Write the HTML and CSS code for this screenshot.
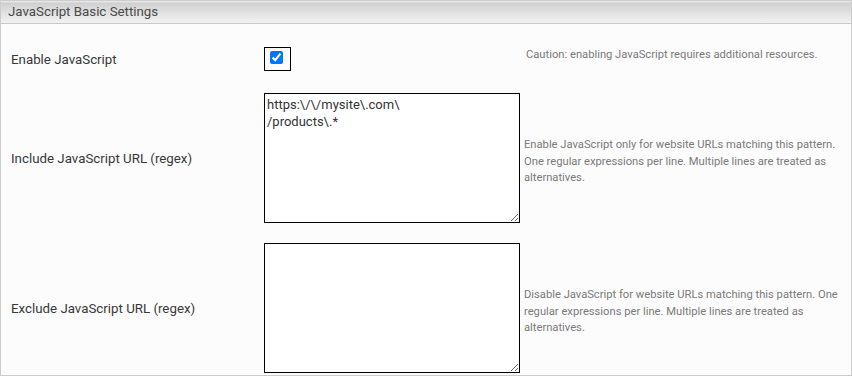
FILE: index.html
```html
<!DOCTYPE html>
<html>
<head>
<meta charset="utf-8">
<link rel="stylesheet" href="styles.css">
</head>
<body>
<div class="panel">
  <div class="panel-header">JavaScript Basic Settings</div>
  <div class="panel-body">
    <div class="row row-first">
      <div class="label">Enable JavaScript</div>
      <div class="control"><span class="check-box"><input type="checkbox" checked></span></div>
      <div class="help help-top">Caution: enabling JavaScript requires additional resources.</div>
    </div>
    <div class="row row-second">
      <div class="label">Include JavaScript URL (regex)</div>
      <div class="control"><textarea class="area">https:\/\/mysite\.com\
/products\.*</textarea></div>
      <div class="help">Enable JavaScript only for website URLs matching this pattern. One regular expressions per line. Multiple lines are treated as alternatives.</div>
    </div>
    <div class="row row-third">
      <div class="label">Exclude JavaScript URL (regex)</div>
      <div class="control"><textarea class="area"></textarea></div>
      <div class="help">Disable JavaScript for website URLs matching this pattern. One regular expressions per line. Multiple lines are treated as alternatives.</div>
    </div>
  </div>
</div>
</body>
</html>
```

FILE: styles.css
```css
html, body {
  margin: 0;
  padding: 0;
  background: #ffffff;
}

body {
  font-family: Roboto, "Liberation Sans", sans-serif;
}

.panel {
  width: 852px;
  height: 376px;
  box-sizing: border-box;
  border: 1px solid #cccccc;
  background: #fcfcfc;
  overflow: hidden;
}

.panel-header {
  height: 23px;
  box-sizing: border-box;
  border-bottom: 1px solid #c8c8c8;
  background: linear-gradient(to bottom, #f0f0f0 0px, #d0d0d0 2px, #f2f2f2 22px);
  color: #4a4a4a;
  font-size: 13.3px;
  line-height: 22px;
  padding-left: 7px;
}

.panel-body {
  display: flex;
  flex-direction: column;
}

.row {
  display: grid;
  grid-template-columns: 263px 259px 1fr;
  align-items: center;
}

.row-first {
  margin-top: 23px;
}

.row-second {
  margin-top: 22px;
}

.row-third {
  margin-top: 20px;
}

.label {
  padding-left: 10px;
  font-size: 13.3px;
  color: #383838;
}

.control {
  display: flex;
}

.check-box {
  display: flex;
  border: 1px solid #000000;
  padding: 3px 7px 6px 5px;
}

.check-box input {
  margin: 0;
  width: 13px;
  height: 13px;
  accent-color: #0075ff;
}

.area {
  width: 256px;
  height: 130px;
  box-sizing: border-box;
  border: 1px solid #000000;
  background: #ffffff;
  font-family: Roboto, "Liberation Sans", sans-serif;
  font-size: 13px;
  line-height: 17px;
  color: #333333;
  padding: 2px 2px;
  margin: 0;
  resize: both;
}

.help {
  font-size: 11.2px;
  line-height: 16.5px;
  color: #7a7a7a;
  padding-left: 1px;
  padding-right: 6px;
  padding-top: 8px;
}

.help-top {
  align-self: start;
  margin-top: 0px;
  padding-top: 0;
  padding-left: 3px;
}
```
